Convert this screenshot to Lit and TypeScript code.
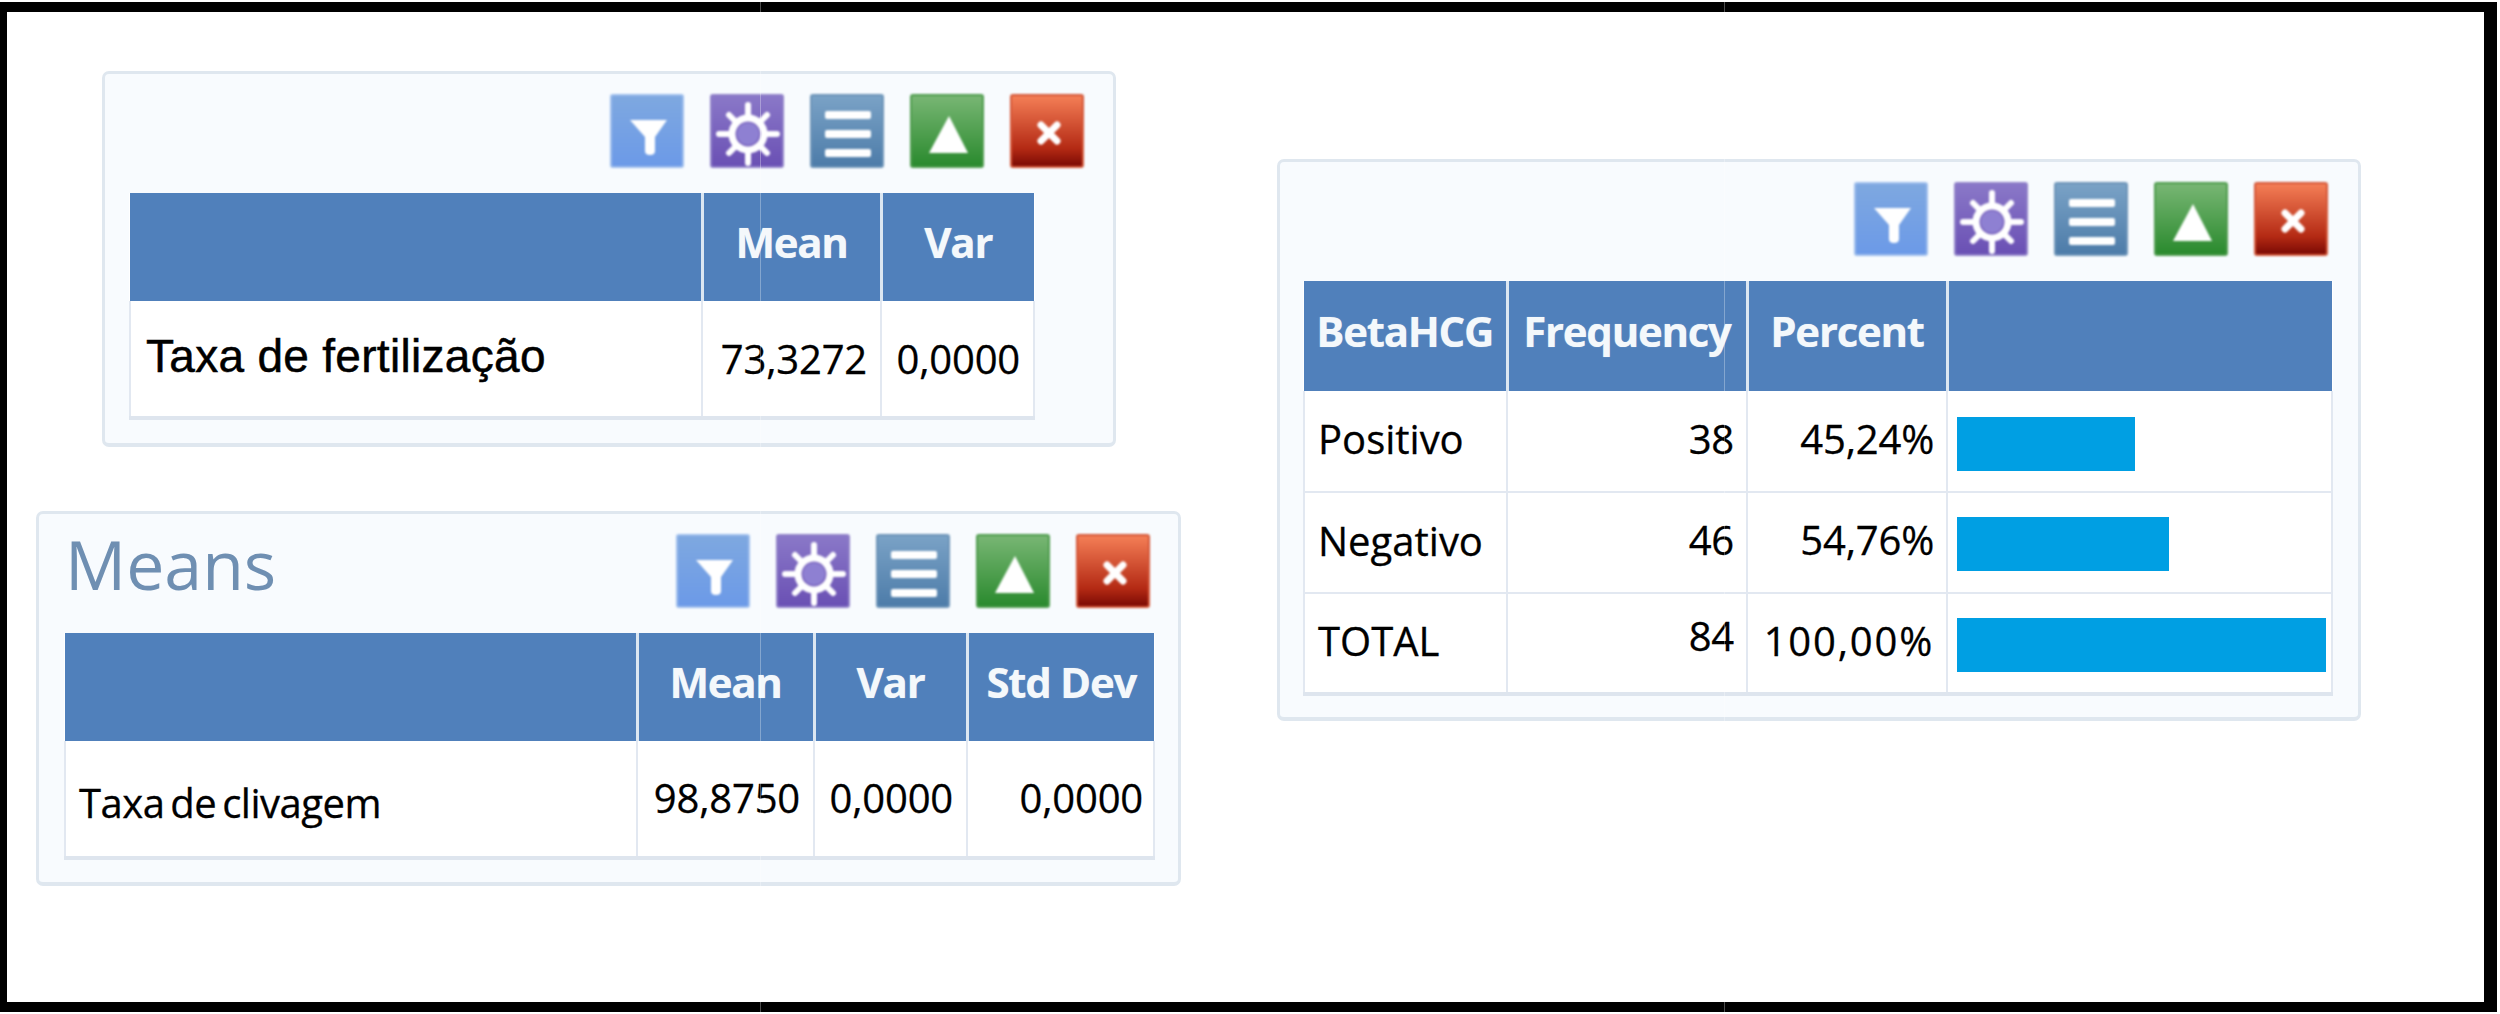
import { LitElement, html, css, svg } from "lit";
import { customElement } from "lit/decorators.js";

type Cell = { text: string; cls?: string; bar?: number };
type Panel = {
  cls: string;
  title?: string;
  cols: number[];
  head: string[];
  rows: Cell[][];
};

const ICONS = {
  filter: svg`<path d="M18 24H55L43 41V55Q43 59 38 59T33 55V41Z" fill="#fff"/>`,
  gear: svg`
    <circle cx="36" cy="38" r="11" fill="#8e80d2"/>
    <circle cx="36" cy="38" r="16" fill="none" stroke="#fff" stroke-width="7"/>
    <g stroke="#fff" stroke-width="6" stroke-linecap="round">
      <path d="M36 20V9M36 56V67M18 38H7M54 38H65M23 25L17 19M49 51L55 57M49 25L55 19M23 51L17 57"/>
    </g>`,
  list: svg`<g fill="#fff">
    <rect x="13" y="15" width="46" height="8" rx="2"/>
    <rect x="13" y="34" width="46" height="8" rx="2"/>
    <rect x="13" y="53" width="46" height="8" rx="2"/></g>`,
  up: svg`<path d="M37 20L56 57H17Z" fill="#fff"/>`,
  close: svg`<path d="M29 29L45 45M45 29L29 45" stroke="#fff" stroke-width="7" stroke-linecap="round"/>`,
};

const PANELS: Panel[] = [
  {
    cls: "p1",
    cols: [572, 179, 153],
    head: ["", "Mean", "Var"],
    rows: [[
      { text: "Taxa de fertilização", cls: "arial" },
      { text: "73,3272", cls: "num" },
      { text: "0,0000", cls: "num" },
    ]],
  },
  {
    cls: "p2",
    title: "Means",
    cols: [572, 177, 153, 187],
    head: ["", "Mean", "Var", "Std Dev"],
    rows: [[
      { text: "Taxa de clivagem", cls: "tight" },
      { text: "98,8750", cls: "num" },
      { text: "0,0000", cls: "num" },
      { text: "0,0000", cls: "num last" },
    ]],
  },
  {
    cls: "p3",
    cols: [203, 240, 200, 385],
    head: ["BetaHCG", "Frequency", "Percent", ""],
    rows: [
      [{ text: "Positivo" }, { text: "38", cls: "num" }, { text: "45,24%", cls: "num" }, { text: "", bar: 178 }],
      [{ text: "Negativo" }, { text: "46", cls: "num" }, { text: "54,76%", cls: "num" }, { text: "", bar: 212 }],
      [{ text: "TOTAL" }, { text: "84", cls: "num raised" }, { text: "100,00%", cls: "num wide" }, { text: "", bar: 369 }],
    ],
  },
];

@customElement("app-root")
export class AppRoot extends LitElement {
  static styles = css`
    :host {
      display: block;
      position: relative;
      width: 2500px;
      height: 1014px;
      box-sizing: border-box;
      padding: 2px 3px 2px 0;
      background: #fff;
      font-family: "Open Sans", "Noto Sans", sans-serif;
    }
    .frame {
      box-sizing: border-box;
      height: 100%;
      border-style: solid;
      border-color: #000;
      border-width: 10px 13px 10px 7px;
      display: grid;
      grid-template-columns: 1270px 1fr;
      background: #fff;
    }
    .left {
      display: flex;
      flex-direction: column;
      align-items: flex-start;
    }
    .panel {
      box-sizing: border-box;
      background: #f8fbfe;
      border: 3px solid #dfe7ef;
      border-bottom-width: 4px;
      border-radius: 7px;
      padding: 20px 26px 23px 24px;
    }
    .p1 { width: 1014px; margin: 59px 0 0 95px; }
    .p2 { width: 1145px; margin: 64px 0 0 29px; padding: 20px 26px 22px 25px; }
    .p3 { width: 1084px; margin: 147px 0 0 0; padding: 20px 26px 21px 23px; }
    .top {
      display: flex;
      align-items: center;
      justify-content: flex-end;
      margin-bottom: 25px;
    }
    .title {
      flex: 1;
      font-size: 68px;
      line-height: 60px;
      padding-bottom: 14px;
      color: #6f8fb2;
      margin-left: 1px;
    }
    .tools { display: flex; gap: 26px; }
    .p1 .tools { margin-right: 3px; }
    .p2 .tools { margin-right: 2px; }
    .p3 .tools { margin-right: 4px; }
    .btn {
      width: 74px;
      height: 74px;
      box-sizing: border-box;
      border-radius: 3px;
      border: 2px solid;
      filter: blur(0.9px);
    }
    .btn svg { display: block; width: 70px; height: 70px; }
    .filter { background: linear-gradient(#7ea8e0, #6c9ae8); border-color: #9cbcec; }
    .gear { background: linear-gradient(#8a78c8, #6a50b4); border-color: #8f80c8; }
    .list { background: linear-gradient(#7aa2c6, #4d7ca9); border-color: #6d94b8; }
    .up { background: linear-gradient(#78b674, #2a8a2e); border-color: #4f9c4e; }
    .close { background: linear-gradient(#f47e56, #b42a14 75%, #7c0a04); border-color: #d4583a; }
    table {
      border-collapse: collapse;
      table-layout: fixed;
      background: #fff;
      border-bottom: 4px solid #dee5ee;
    }
    th {
      box-sizing: border-box;
      background: #5080bb;
      color: #f4f8fb;
      font-size: 42px;
      font-weight: 700;
      letter-spacing: -1.3px;
      padding: 0 0 11px;
      text-align: center;
      border-right: 3px solid #dbe6f1;
      white-space: nowrap;
      overflow: hidden;
      text-shadow: 0 0 1px rgba(255, 255, 255, 0.5);
    }
    th:last-child { border-right: none; }
    td {
      font-size: 40px;
      color: #000;
      padding: 0 0 0 13px;
      border: 2px solid #e2e8f1;
      border-top: none;
      white-space: nowrap;
      box-sizing: border-box;
      -webkit-text-stroke: 0.3px #000;
    }
    .p1 th, .p2 th { height: 108px; }
    .p1 td, .p2 td { height: 117px; }
    .p3 th { height: 110px; }
    .p3 td { height: 101px; padding-bottom: 5px; }
    td.num { text-align: right; padding-right: 13px; padding-left: 0; letter-spacing: -0.2px; }
    .p2 td.num { padding-bottom: 3px; }
    .p3 td.num { padding-bottom: 6px; padding-right: 12px; }
    .p3 td.raised { padding-bottom: 16px; }
    td.wide { letter-spacing: 1.8px; }
    td.last { padding-right: 10px; }
    td.arial {
      font-family: "Liberation Sans", Arial, sans-serif;
      font-size: 46px;
      letter-spacing: 0.3px;
      padding-left: 15px;
      padding-bottom: 6px;
      -webkit-text-stroke: 0.5px #000;
    }
    td.tight { padding-left: 13px; letter-spacing: -0.5px; word-spacing: -4px; padding-top: 8px; }
    .p3 td.barcell { padding: 3px 0 0 9px; }
    .p3 tr:first-child td.barcell { padding-top: 5px; }
    .bar { height: 54px; background: #009fe3; }
    .seam {
      position: absolute;
      top: 0;
      bottom: 0;
      width: 1px;
      background: rgba(255, 255, 255, 0.3);
      pointer-events: none;
    }
    .s1 { left: 760px; }
    .s2 { left: 1724px; }
  `;

  private tools() {
    return html`<div class="tools">
      ${(Object.keys(ICONS) as (keyof typeof ICONS)[]).map(
        (k) => html`<div class="btn ${k}"><svg viewBox="0 0 70 70">${ICONS[k]}</svg></div>`
      )}
    </div>`;
  }

  private panel(p: Panel) {
    const total = p.cols.reduce((a, b) => a + b, 0);
    return html`<section class="panel ${p.cls}">
      <div class="top">
        ${p.title ? html`<div class="title">${p.title}</div>` : ""}
        ${this.tools()}
      </div>
      <table style="width:${total}px">
        <colgroup>${p.cols.map((c) => html`<col style="width:${c}px" />`)}</colgroup>
        <thead><tr>${p.head.map((h) => html`<th>${h}</th>`)}</tr></thead>
        <tbody>
          ${p.rows.map(
            (r) => html`<tr>
              ${r.map((c) =>
                c.bar !== undefined
                  ? html`<td class="barcell"><div class="bar" style="width:${c.bar}px"></div></td>`
                  : html`<td class="${c.cls ?? ""}">${c.text}</td>`
              )}
            </tr>`
          )}
        </tbody>
      </table>
    </section>`;
  }

  render() {
    return html`<div class="frame">
        <div class="left">${this.panel(PANELS[0])}${this.panel(PANELS[1])}</div>
        <div>${this.panel(PANELS[2])}</div>
      </div>
      <div class="seam s1"></div>
      <div class="seam s2"></div>`;
  }
}
